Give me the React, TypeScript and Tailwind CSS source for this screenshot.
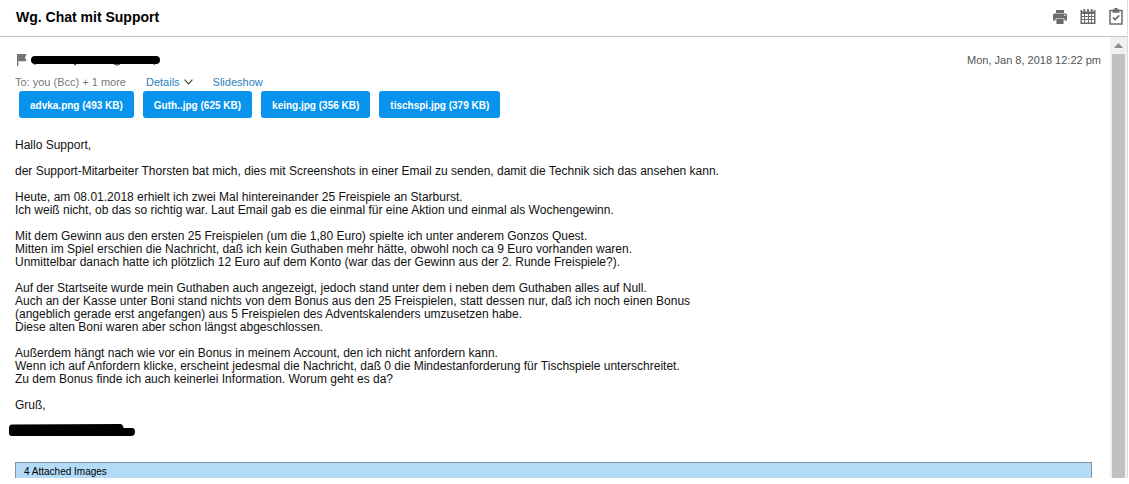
import * as React from 'react'

const attachments = [
  { name: 'advka.png', size: '493 KB' },
  { name: 'Guth..jpg', size: '625 KB' },
  { name: 'keing.jpg', size: '356 KB' },
  { name: 'tischspi.jpg', size: '379 KB' },
]

const paragraphs = [
  ['Hallo Support,'],
  [
    'der Support-Mitarbeiter Thorsten bat mich, dies mit Screenshots in einer Email zu senden, damit die Technik sich das ansehen kann.',
  ],
  [
    'Heute, am 08.01.2018 erhielt ich zwei Mal hintereinander 25 Freispiele an Starburst.',
    'Ich weiß nicht, ob das so richtig war. Laut Email gab es die einmal für eine Aktion und einmal als Wochengewinn.',
  ],
  [
    'Mit dem Gewinn aus den ersten 25 Freispielen (um die 1,80 Euro) spielte ich unter anderem Gonzos Quest.',
    'Mitten im Spiel erschien die Nachricht, daß ich kein Guthaben mehr hätte, obwohl noch ca 9 Euro vorhanden waren.',
    'Unmittelbar danach hatte ich plötzlich 12 Euro auf dem Konto (war das der Gewinn aus der 2. Runde Freispiele?).',
  ],
  [
    'Auf der Startseite wurde mein Guthaben auch angezeigt, jedoch stand unter dem i neben dem Guthaben alles auf Null.',
    'Auch an der Kasse unter Boni stand nichts von dem Bonus aus den 25 Freispielen, statt dessen nur, daß ich noch einen Bonus',
    '(angeblich gerade erst angefangen) aus 5 Freispielen des Adventskalenders umzusetzen habe.',
    'Diese alten Boni waren aber schon längst abgeschlossen.',
  ],
  [
    'Außerdem hängt nach wie vor ein Bonus in meinem Account, den ich nicht anfordern kann.',
    'Wenn ich auf Anfordern klicke, erscheint jedesmal die Nachricht, daß 0 die Mindestanforderung für Tischspiele unterschreitet.',
    'Zu dem Bonus finde ich auch keinerlei Information. Worum geht es da?',
  ],
  ['Gruß,'],
]

function PrintIcon() {
  return (
    <svg width="14" height="14" viewBox="0 0 14 14" fill="#6b6b6b" aria-hidden="true">
      <path d="M3 0h8v3H3z" />
      <path d="M1.5 3.6h11A1.5 1.5 0 0 1 14 5.1V10.4h-2.6V8.4H2.6v2H0V5.1a1.5 1.5 0 0 1 1.5-1.5z" />
      <path d="M3.4 9h7.2v5H3.4z" />
      <path d="M11.2 4.8h1.2v1.1h-1.2z" fill="#fff" />
    </svg>
  )
}

function CalendarIcon() {
  return (
    <svg width="16" height="15" viewBox="0 0 16 15" fill="#6b6b6b" aria-hidden="true">
      <path d="M0.5 1h1.7v1.4h1.2V0h1.8v2.4h1.9V0h1.8v2.4h1.9V0h1.8v2.4h1.2V1h1.7v14h-15z" />
      <path
        d="M2 5h2v2H2zM5 5h3v2H5zM9 5h2v2H9zM12 5h2v2h-2zM2 8h2v2H2zM5 8h3v2H5zM9 8h2v2H9zM12 8h2v2h-2zM2 11h2v2.4H2zM5 11h3v2.4H5zM9 11h2v2.4H9zM12 11h2v2.4h-2z"
        fill="#fff"
      />
    </svg>
  )
}

function TaskIcon() {
  return (
    <svg width="14" height="17" viewBox="0 0 14 17" fill="none" aria-hidden="true">
      <path d="M1 2.5h12v13.5H1z" stroke="#6b6b6b" strokeWidth="1.5" />
      <path d="M3.6 1.6h1.9V0h3v1.6h1.9v3.2H3.6z" fill="#6b6b6b" />
      <path d="M4 9.4l2.2 2.1L10.2 7.3" stroke="#6b6b6b" strokeWidth="1.7" />
    </svg>
  )
}

function FlagIcon() {
  return (
    <svg width="10" height="12" viewBox="0 0 10 12" fill="#737373" aria-hidden="true">
      <path d="M0 0h9.6L8 3.6l1.6 3.6H1.3V12H0z" />
    </svg>
  )
}

function Toolbar() {
  return (
    <header className="flex h-[37px] items-center justify-between border-b border-[#c4c4c4] pr-1 pb-[3px] pl-4">
      <h1 className="text-sm font-bold text-black">Wg. Chat mit Support</h1>
      <div className="flex items-center gap-[13px]">
        <button type="button" aria-label="Print">
          <PrintIcon />
        </button>
        <button type="button" aria-label="Calendar">
          <CalendarIcon />
        </button>
        <button type="button" aria-label="Task">
          <TaskIcon />
        </button>
      </div>
    </header>
  )
}

function MessageHeader() {
  return (
    <div className="pr-[9px]">
      <div className="flex h-4 items-center justify-between">
        <div className="flex items-center gap-1 pl-0.5">
          <button type="button" aria-label="Flag">
            <FlagIcon />
          </button>
          <svg width="129" height="12" viewBox="0 0 129 12" aria-hidden="true">
            <path d="M4 8v3M45 8q1 3-2 3M82 9q4 4 8 0M124 9l-1 2" stroke="#222" fill="none" />
            <rect y="2" width="129" height="8" rx="4" />
          </svg>
        </div>
        <time className="text-[11px] text-[#555]">Mon, Jan 8, 2018 12:22 pm</time>
      </div>
      <div className="mt-1.5 flex h-4 items-center text-[11px] text-[#777]">
        <span>To: you (Bcc) + 1 more</span>
        <button type="button" className="ml-5 flex items-center gap-1 text-[#2a80bd]">
          Details
          <svg width="9" height="6" viewBox="0 0 9 6" fill="none" aria-hidden="true">
            <path d="M0.6 0.7L4.5 4.9 8.4 0.7" stroke="#444" strokeWidth="1.2" />
          </svg>
        </button>
        <a href="#slideshow" className="ml-5 text-[#2a80bd]">
          Slideshow
        </a>
      </div>
      <div className="mt-px flex flex-wrap gap-[9px] pl-1">
        {attachments.map((file) => (
          <button
            key={file.name}
            type="button"
            className="h-[27px] rounded-[3px] bg-[#0894ec] px-[11px] pt-px text-[10px] font-bold text-white"
          >
            {file.name} ({file.size})
          </button>
        ))}
      </div>
    </div>
  )
}

function Scrollbar() {
  return (
    <div className="flex w-[17px] shrink-0 flex-col items-center bg-[#f1f1f1] px-0.5" aria-hidden="true">
      <div className="flex h-[17px] items-center">
        <svg width="9" height="5" viewBox="0 0 9 5" fill="#8c8c8c">
          <path d="M4.5 0L9 5H0z" />
        </svg>
      </div>
      <div className="w-full flex-1 bg-[#c1c1c1]" />
    </div>
  )
}

export default function App() {
  return (
    <div className="bg-white pr-px font-['Liberation_Sans',Arial,sans-serif]">
      <div className="border-r border-[#dcdcdc]">
        <Toolbar />
        <div className="flex">
          <main className="min-w-0 flex-1 pt-[15px] pl-[15px]">
            <MessageHeader />
            <div className="mt-[21px] space-y-[13px] text-xs leading-[13px] text-[#111]">
              {paragraphs.map((lines) => (
                <p key={lines[0]}>
                  {lines.map((line) => (
                    <span key={line} className="block">
                      {line}
                    </span>
                  ))}
                </p>
              ))}
            </div>
            <svg width="126" height="13" viewBox="0 0 126 13" className="mt-3 -ml-1.5" aria-hidden="true">
              <path d="M3 0.6L111 0Q114 0 114.5 4H123Q126 4 126 8T122 12H3Q0 12 0 9V4Q0 1 3 0.6z" />
            </svg>
            <section className="mt-[25px] mr-[18px] h-4 overflow-hidden border border-b-0 border-[#8095a8] bg-[#b3dbf8] px-2">
              <h2 className="pt-0.5 text-[10px] leading-[14px] text-black">4 Attached Images</h2>
            </section>
          </main>
          <Scrollbar />
        </div>
      </div>
    </div>
  )
}
